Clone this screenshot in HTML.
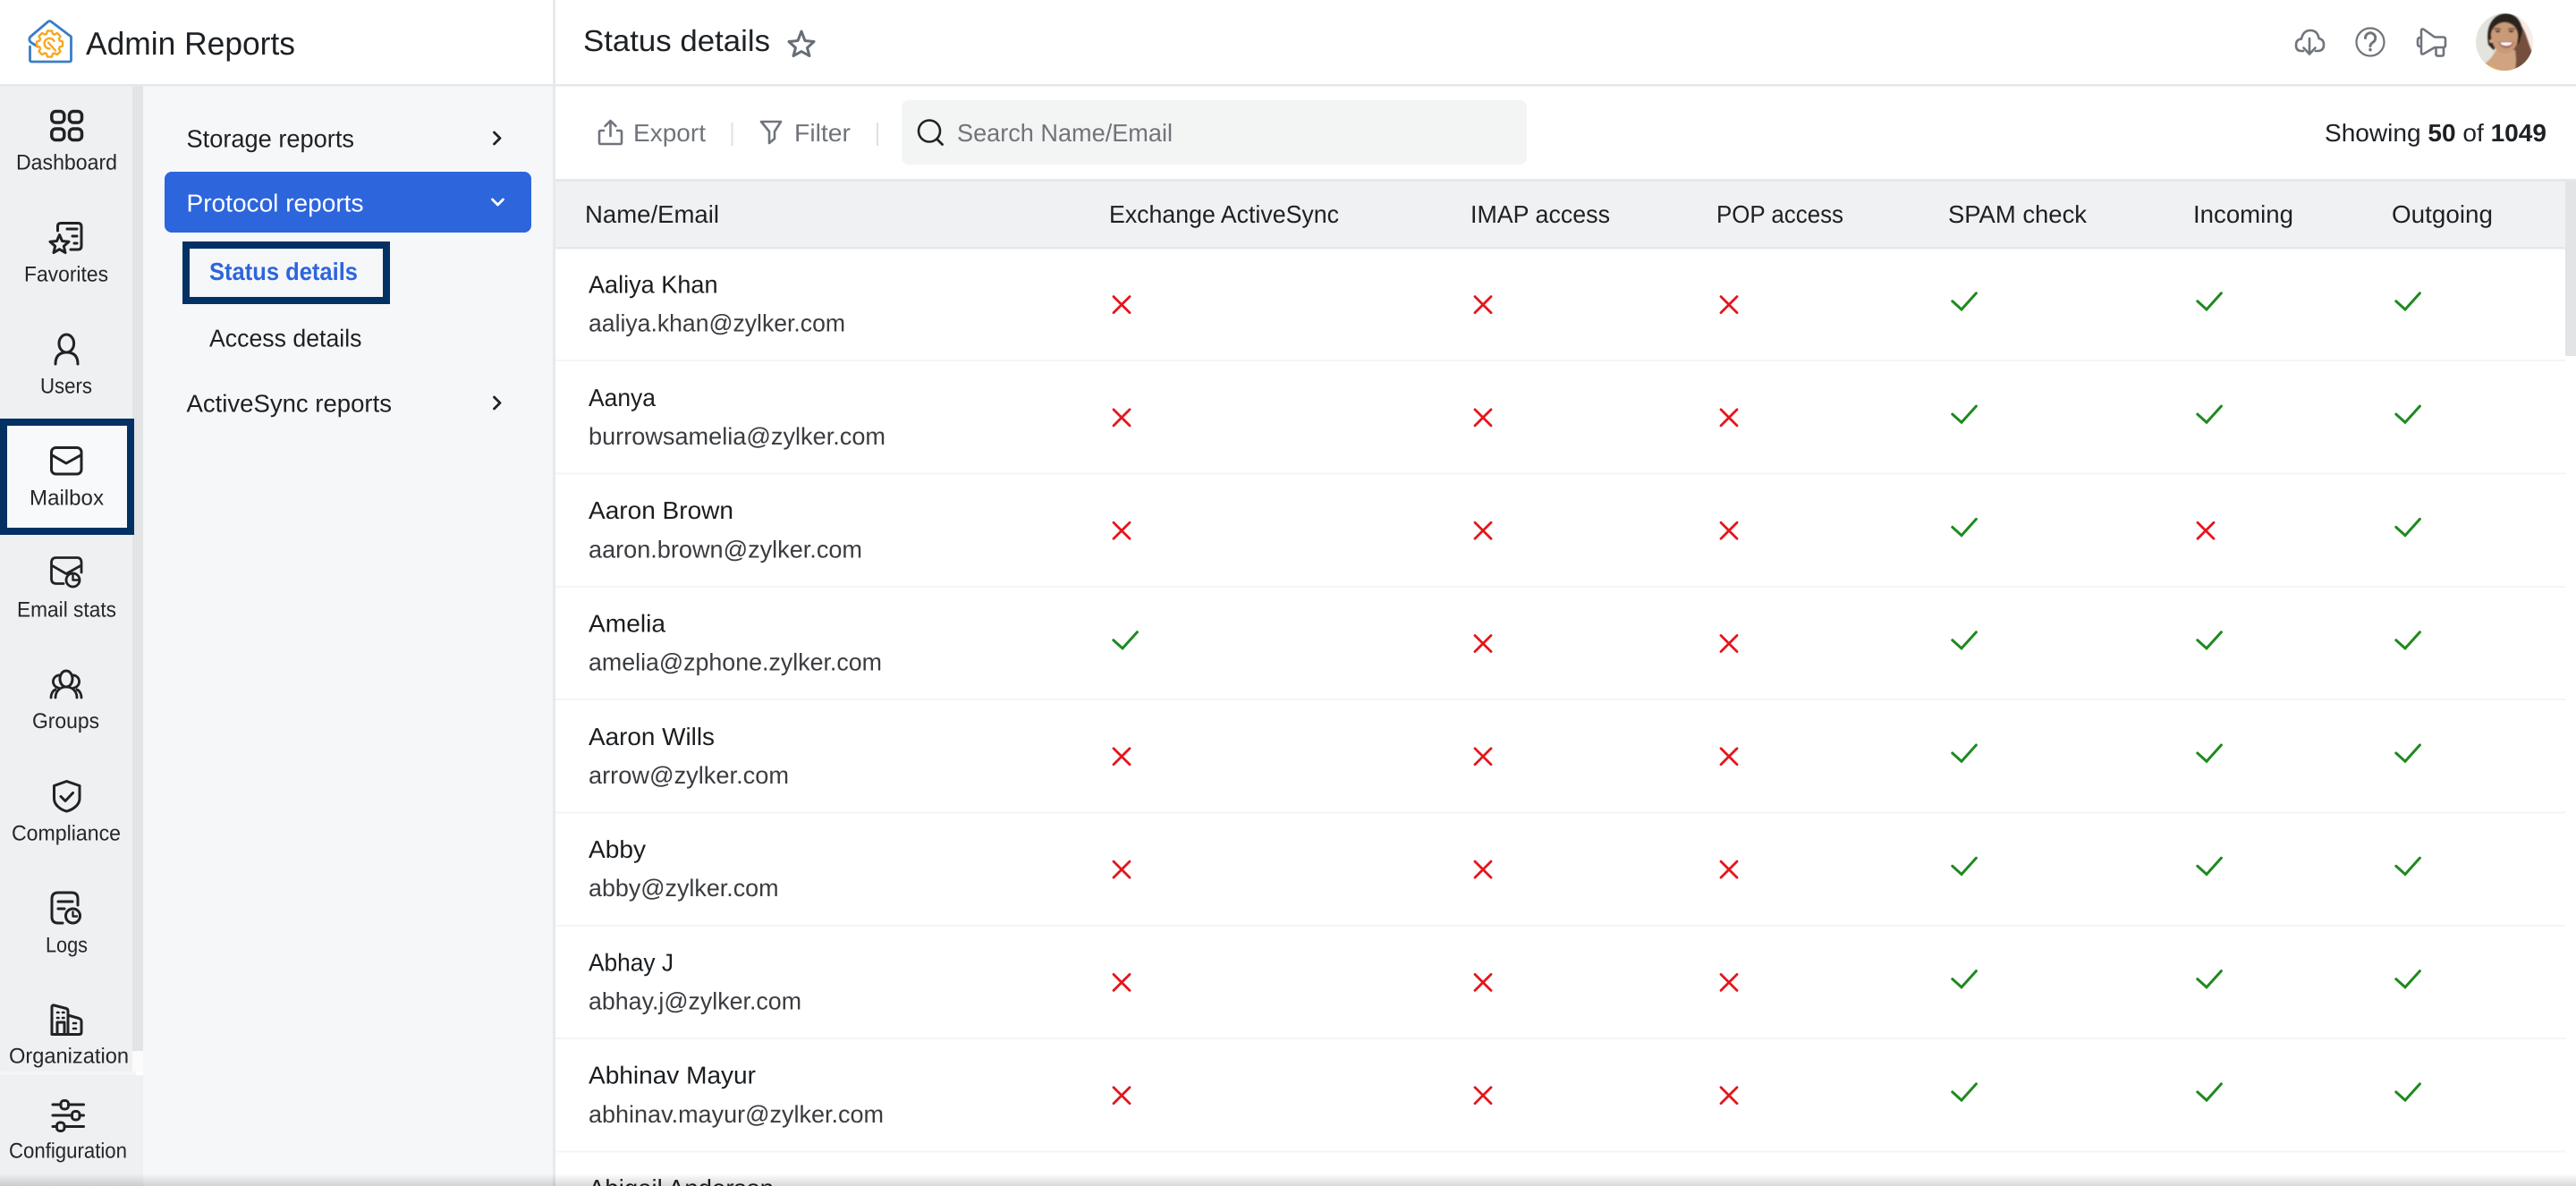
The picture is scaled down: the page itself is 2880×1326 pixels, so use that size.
<!DOCTYPE html>
<html lang="en">
<head>
<meta charset="utf-8">
<title>Admin Reports - Status details</title>
<style>
html,body{margin:0;padding:0;width:2880px;height:1326px;overflow:hidden;background:#fff}
svg{display:block}
text{font-family:"Liberation Sans",sans-serif;text-rendering:geometricPrecision;fill:#1d2024}
.nav{font-size:24px;fill:#23272b}
.pan{font-size:27.5px}
.th{font-size:27.5px;fill:#1d2024}
.nm{font-size:27.5px;fill:#1a1d20}
.em{font-size:27px;fill:#3a3c3f}
.tl{font-size:27.5px;fill:#70747a}
.ic{fill:none;stroke:#1f2326;stroke-width:3;stroke-linecap:round;stroke-linejoin:round}
.ig{fill:none;stroke:#70747c;stroke-width:2.6;stroke-linecap:round;stroke-linejoin:round}
</style>
</head>
<body>
<svg xmlns="http://www.w3.org/2000/svg" width="2880" height="1326" viewBox="0 0 2880 1326">
<defs>
<path id="x" d="M1 1L19 19M19 1L1 19" fill="none" stroke="#e3161c" stroke-width="2.8" stroke-linecap="round"/>
<path id="k" d="M0.8 9.8L11 19L27.4 0.8" fill="none" stroke="#1e8a1e" stroke-width="3" stroke-linecap="round" stroke-linejoin="miter"/>
<path id="t" d="M11.2 -3.5L14.5 -2.5V2.5L11.2 3.5A11.7 11.7 0 0 1 10.4 5.4" fill="none" stroke="#f5a81f" stroke-width="2.4" stroke-linejoin="round"/>
<linearGradient id="sh" x1="0" y1="0" x2="0" y2="1"><stop offset="0" stop-color="#000" stop-opacity="0"/><stop offset="1" stop-color="#000" stop-opacity=".15"/></linearGradient>
<clipPath id="av"><circle cx="2800" cy="47" r="32"/></clipPath>
<filter id="soft" x="-5%" y="-5%" width="110%" height="110%"><feGaussianBlur stdDeviation="0.7"/></filter>
</defs>

<!-- panels -->
<rect x="0" y="96" width="148" height="1230" fill="#eff0f2"/>
<rect x="148" y="96" width="12" height="1079" fill="#e3e4e6"/>
<rect x="148" y="1175" width="12" height="23" fill="#fbfbfc"/>
<rect x="0" y="1198" width="152" height="4" fill="#f5f6f7"/>
<rect x="0" y="1202" width="160" height="124" fill="#eff0f2"/>
<rect x="160" y="96" width="458" height="1230" fill="#f6f7f9"/>
<rect x="618" y="0" width="3" height="1326" fill="#e8e9eb"/>
<rect x="0" y="94" width="2880" height="2.5" fill="#e6e7e9"/>

<!-- logo -->
<g fill="none" stroke-linecap="round" stroke-linejoin="round">
<path d="M33.5 52V67q0 2 2 2H77.5q2 0 2-2V41L57 24q-1.500-1-3 0L34 41q-1.500 1.500-1 4q.5 2 2.500 3L42 52" stroke="#3b7dc4" stroke-width="2.800"/>
<g transform="translate(55.500,49)">
<use href="#t"/>
<use href="#t" transform="rotate(45)"/>
<use href="#t" transform="rotate(90)"/>
<use href="#t" transform="rotate(135)"/>
<use href="#t" transform="rotate(180)"/>
<use href="#t" transform="rotate(225)"/>
<use href="#t" transform="rotate(270)"/>
<use href="#t" transform="rotate(315)"/>
</g>
<path d="M60.500 46a5.800 5.800 0 1 0-5 8.500M54 47.500l8 9" stroke="#f5a81f" stroke-width="2.400"/>
</g>
<text x="96" y="61" font-size="36" textLength="234" lengthAdjust="spacingAndGlyphs" fill="#1d2024">Admin Reports</text>

<!-- sidebar icons -->
<g class="ic">
<g stroke-width="3.500">
<rect x="57.800" y="124.500" width="14" height="12.500" rx="4.500"/>
<rect x="77.500" y="124.500" width="14" height="12.500" rx="4.500"/>
<rect x="57.800" y="144" width="14" height="12.500" rx="4.500"/>
<rect x="77.500" y="144" width="14" height="12.500" rx="4.500"/>
</g>
<path d="M64.500 258V253q0-3.500 3.500-3.500H87q4 0 4 4V275q0 4-4 4H79M75 256H86M81 264H86M83 272H86"/>
<path d="M66.500 262.500L69.500 269.500L77 270.200L71.300 275.200L73 282.500L66.500 278.700L60 282.500L61.700 275.200L56 270.200L63.500 269.500Z"/>
<ellipse cx="74.300" cy="384" rx="8.300" ry="10"/>
<path d="M62 407Q62 394 74.500 394Q87 394 87 407"/>
<path d="M71 652.500H63q-5.500 0-5.500-5.500V629q0-5.500 5.500-5.500H86q5 0 5 5.500V640M57.500 632L74 641.500L91 632" stroke-width="2.800"/>
<circle cx="81.500" cy="648.500" r="7.500" stroke-width="2.800"/>
<path d="M81.500 641V648.500H89" stroke-width="2.400"/>
<ellipse cx="74" cy="759" rx="7" ry="9"/>
<path d="M67.500 755a6.500 6.500 0 1 0-2 14M80.500 755a6.500 6.500 0 1 1 2 14M62 780C62 773 67 768 74 768S86 773 86 780M57 780C57 776 59 772 62 771M91 780C91 776 89 772 86 771" stroke-width="2.800"/>
<path d="M74.500 873.500L89 878.500V893C89 900 81 905.500 74.500 907C68 905.500 60.500 900 60.500 893V878.500Z"/>
<path d="M68 890.500L73 895.500L81.500 886.500"/>
<path d="M70 1032H65q-7 0-7-7V1005q0-7 7-7H80q7 0 7 7V1012M65 1008H81M65 1016H72"/>
<circle cx="81.500" cy="1024" r="8"/>
<path d="M81.500 1019.500V1024.500H86" stroke-width="2.400"/>
<path d="M58 1156.500V1126q0-2.500 2.500-2L74 1127.500q2 .5 2 3V1156.500M76 1135L88 1138.500q3 1 3 3.500V1154q0 2.500-2.500 2.500H60q-2 0-2-2M64 1156V1143H72V1156"/>
<path d="M64 1132H65.500M70 1132H71.500M64 1138H65.500M70 1138H71.500M82 1144H85M82 1150H85" stroke-width="2.600"/>
<path d="M59 1235H68M76.500 1235H93.500M59 1247H80.500M89 1247H93.500M59 1259.500H63.500M72 1259.500H93.500"/>
<rect x="68" y="1230.500" width="8.500" height="9.500" rx="3.500"/>
<rect x="80.500" y="1242.500" width="8.500" height="9.500" rx="3.500"/>
<rect x="63.500" y="1255" width="8.500" height="9.500" rx="3.500"/>
</g>
<g transform="translate(0,-0.5)">
<text class="nav" x="18" y="190" textLength="113" lengthAdjust="spacingAndGlyphs">Dashboard</text>
<text class="nav" x="27" y="315" textLength="94" lengthAdjust="spacingAndGlyphs">Favorites</text>
<text class="nav" x="45" y="440" textLength="58" lengthAdjust="spacingAndGlyphs">Users</text>
<text class="nav" x="19" y="690" textLength="111" lengthAdjust="spacingAndGlyphs">Email stats</text>
<text class="nav" x="36" y="814.500" textLength="75" lengthAdjust="spacingAndGlyphs">Groups</text>
<text class="nav" x="13" y="940" textLength="122" lengthAdjust="spacingAndGlyphs">Compliance</text>
<text class="nav" x="51" y="1065" textLength="47" lengthAdjust="spacingAndGlyphs">Logs</text>
<text class="nav" x="10" y="1189" textLength="134" lengthAdjust="spacingAndGlyphs">Organization</text>
<text class="nav" x="10" y="1295" textLength="132" lengthAdjust="spacingAndGlyphs">Configuration</text>
</g>

<!-- mailbox focus frame -->
<rect x="4" y="472" width="142" height="122" fill="#f8f9fa" stroke="#033163" stroke-width="8"/>
<g class="ic">
<rect x="57.500" y="500.500" width="33.500" height="29.500" rx="5"/>
<path d="M57.500 508.500L74 518L91 508.500"/>
</g>
<text class="nav" x="33" y="564.500" textLength="83" lengthAdjust="spacingAndGlyphs">Mailbox</text>

<!-- sub navigation -->
<text class="pan" x="208.500" y="164.500" textLength="187.500" lengthAdjust="spacingAndGlyphs">Storage reports</text>
<path d="M552.500 148L559 154.500L552.500 161" fill="none" stroke="#1f2326" stroke-width="2.800" stroke-linecap="round" stroke-linejoin="round"/>
<rect x="184" y="192" width="410" height="68" rx="8" fill="#2d65dc"/>
<text class="pan" x="208.500" y="236.500" textLength="198" lengthAdjust="spacingAndGlyphs" style="fill:#fff">Protocol reports</text>
<path d="M550.500 223L556.500 229L562.500 223" fill="none" stroke="#fff" stroke-width="2.800" stroke-linecap="round" stroke-linejoin="round"/>
<rect x="208" y="274" width="224" height="62" fill="#f6f7f9" stroke="#033163" stroke-width="8"/>
<text class="pan" x="234" y="313" textLength="166" lengthAdjust="spacingAndGlyphs" font-weight="700" style="fill:#2d65dc">Status details</text>
<text class="pan" x="234" y="387.500" textLength="170.500" lengthAdjust="spacingAndGlyphs">Access details</text>
<text class="pan" x="208.500" y="460.500" textLength="229.500" lengthAdjust="spacingAndGlyphs">ActiveSync reports</text>
<path d="M552.500 444L559 450.500L552.500 457" fill="none" stroke="#1f2326" stroke-width="2.800" stroke-linecap="round" stroke-linejoin="round"/>

<!-- header -->
<text x="652" y="57" font-size="33.500" textLength="209" lengthAdjust="spacingAndGlyphs" fill="#1d2024">Status details</text>
<path d="M896 35L900 45.500L910 46.500L902.500 53.500L905 62.500L896 57.500L887 62.500L889.500 53.500L882 46.500L892 45.500Z" fill="none" stroke="#666d75" stroke-width="3" stroke-linejoin="round"/>
<g class="ig">
<path d="M2575 57H2573Q2567 57 2567 50.500Q2567 44 2573 43.500Q2575 34 2583 34Q2591 34 2592.500 43Q2598 44 2598 50Q2598 57 2591 57H2589"/>
<path d="M2582 43V60M2575.500 53.500L2582 60.500L2588.500 53.500"/>
<circle cx="2650" cy="47" r="15.500" stroke-width="2.200"/>
<path d="M2644.500 42.500A5.600 5.600 0 1 1 2653 47.200C2651 48.500 2650 49.500 2650 51.500" stroke-width="3"/>
<path d="M2650 55.500V55.700" stroke-width="3.400"/>
<path d="M2707 34.500Q2707 31.500 2710 33L2722 41.500H2731.500Q2734 41.500 2734 44V50.500Q2734 53 2731.500 53H2722L2710 60Q2707 61.500 2707 58.500V52H2706Q2703 52 2703 49V45Q2703 42 2706 42H2707ZM2707 42V52M2723.500 53V60.500Q2723.500 62.500 2726 62.500H2729.500Q2732 62.500 2732 60.500V53"/>
</g>

<!-- avatar -->
<g clip-path="url(#av)">
<rect x="2768" y="15" width="64" height="64" fill="#e4e4df"/>
<rect x="2816" y="15" width="16" height="64" fill="#f8ede6"/>
<g filter="url(#soft)">
<path d="M2812 22C2824 30 2825 46 2831 58C2830 70 2820 76 2808 80L2806 50Z" fill="#74503e"/>
<path d="M2782 50C2778 26 2790 15 2802 15C2812 15 2820 24 2820 36L2816 50L2806 30L2788 56Z" fill="#2c201b"/>
<path d="M2788 60C2785 67 2778 70 2775 75V82H2812L2813 66L2812 56L2792 54Z" fill="#d0a381"/>
<path d="M2776 70L2796 79H2772Z" fill="#f0b52d"/>
<path d="M2785 38C2786 30 2794 25 2800 25C2807 25 2815 30 2815 40C2815 52 2808 60 2800 60C2792 60 2785 50 2785 38Z" fill="#c99a78"/>
<path d="M2788 32.800Q2792 31 2796 32.800M2804 32.800Q2808 31 2812 32.800" fill="none" stroke="#4a3228" stroke-width="1.200"/>
<ellipse cx="2792.500" cy="35" rx="2.800" ry="1.200" fill="#4a3228"/>
<ellipse cx="2807.500" cy="35" rx="2.800" ry="1.200" fill="#4a3228"/>
<path d="M2793 47Q2802 46 2811 47Q2808 54 2802 54Q2796 54 2793 47Z" fill="#ad6a5c"/>
<path d="M2795 47.800Q2802 47 2809 47.800Q2807 51 2802 51Q2797 51 2795 47.800Z" fill="#fff"/>
<circle cx="2785" cy="46" r="1.800" fill="#e0b080"/>
</g>
</g>

<!-- toolbar -->
<g class="ig" stroke-width="2.400">
<path d="M675 146H671.500Q670 146 670 147.500V159.500Q670 161 671.500 161H693.500Q695 161 695 159.500V147.500Q695 146 693.500 146H690M682.500 152V135.500M676.500 141L682.500 135L688.500 141"/>
<path d="M851 136H873L866 147V155L860 160V147Z"/>
</g>
<text class="tl" x="708" y="158" textLength="81" lengthAdjust="spacingAndGlyphs">Export</text>
<rect x="817.500" y="137" width="2" height="26" fill="#dfe0e2"/>
<text class="tl" x="888" y="158" textLength="63" lengthAdjust="spacingAndGlyphs">Filter</text>
<rect x="980" y="137" width="2" height="26" fill="#dfe0e2"/>
<rect x="1008" y="112" width="699" height="72" rx="8" fill="#f3f4f4"/>
<circle cx="1039" cy="146.500" r="12" fill="none" stroke="#222" stroke-width="2.600"/>
<path d="M1047.500 155.500L1053.500 161.500" stroke="#222" stroke-width="2.800" stroke-linecap="round"/>
<text class="tl" x="1070" y="158" textLength="241" lengthAdjust="spacingAndGlyphs">Search Name/Email</text>
<text x="2599" y="158" font-size="27.500" textLength="248" lengthAdjust="spacingAndGlyphs">Showing <tspan font-weight="700">50</tspan> of <tspan font-weight="700">1049</tspan></text>

<!-- table header -->
<rect x="621" y="200" width="2259" height="3" fill="#e6e7e9"/>
<rect x="621" y="203" width="2247" height="73" fill="#f0f1f3"/>
<rect x="621" y="276" width="2247" height="2.500" fill="#e6e7e9"/>
<rect x="2868" y="203" width="12" height="195" fill="#e3e4e6"/>
<text class="th" x="654" y="249" textLength="150" lengthAdjust="spacingAndGlyphs">Name/Email</text>
<text class="th" x="1240" y="249" textLength="257" lengthAdjust="spacingAndGlyphs">Exchange ActiveSync</text>
<text class="th" x="1644" y="249" textLength="156" lengthAdjust="spacingAndGlyphs">IMAP access</text>
<text class="th" x="1919" y="249" textLength="142" lengthAdjust="spacingAndGlyphs">POP access</text>
<text class="th" x="2178" y="249" textLength="155" lengthAdjust="spacingAndGlyphs">SPAM check</text>
<text class="th" x="2452" y="249" textLength="112" lengthAdjust="spacingAndGlyphs">Incoming</text>
<text class="th" x="2674" y="249" textLength="113" lengthAdjust="spacingAndGlyphs">Outgoing</text>

<!-- row separators -->
<g fill="#f5f5f5">
<rect x="621" y="402" width="2247" height="2"/>
<rect x="621" y="528.500" width="2247" height="2"/>
<rect x="621" y="655" width="2247" height="2"/>
<rect x="621" y="781" width="2247" height="2"/>
<rect x="621" y="907.500" width="2247" height="2"/>
<rect x="621" y="1034" width="2247" height="2"/>
<rect x="621" y="1160" width="2247" height="2"/>
<rect x="621" y="1286.500" width="2247" height="2"/>
</g>

<!-- rows -->
<text class="nm" x="658" y="327.600" textLength="144.500" lengthAdjust="spacingAndGlyphs">Aaliya Khan</text>
<text class="em" x="658" y="370.700" textLength="287" lengthAdjust="spacingAndGlyphs">aaliya.khan@zylker.com</text>
<use href="#x" x="1244" y="330.600"/><use href="#x" x="1648" y="330.600"/><use href="#x" x="1923" y="330.600"/><use href="#k" x="2182" y="327"/><use href="#k" x="2456" y="327"/><use href="#k" x="2678" y="327"/>

<g transform="translate(0,126.300)">
<text class="nm" x="658" y="327.600" textLength="75" lengthAdjust="spacingAndGlyphs">Aanya</text>
<text class="em" x="658" y="370.700" textLength="332" lengthAdjust="spacingAndGlyphs">burrowsamelia@zylker.com</text>
<use href="#x" x="1244" y="330.600"/><use href="#x" x="1648" y="330.600"/><use href="#x" x="1923" y="330.600"/><use href="#k" x="2182" y="327"/><use href="#k" x="2456" y="327"/><use href="#k" x="2678" y="327"/>
</g>

<g transform="translate(0,252.600)">
<text class="nm" x="658" y="327.600" textLength="162" lengthAdjust="spacingAndGlyphs">Aaron Brown</text>
<text class="em" x="658" y="370.700" textLength="306" lengthAdjust="spacingAndGlyphs">aaron.brown@zylker.com</text>
<use href="#x" x="1244" y="330.600"/><use href="#x" x="1648" y="330.600"/><use href="#x" x="1923" y="330.600"/><use href="#k" x="2182" y="327"/><use href="#x" x="2456" y="330.600"/><use href="#k" x="2678" y="327"/>
</g>

<g transform="translate(0,378.900)">
<text class="nm" x="658" y="327.600" textLength="86" lengthAdjust="spacingAndGlyphs">Amelia</text>
<text class="em" x="658" y="370.700" textLength="328" lengthAdjust="spacingAndGlyphs">amelia@zphone.zylker.com</text>
<use href="#k" x="1244" y="327"/><use href="#x" x="1648" y="330.600"/><use href="#x" x="1923" y="330.600"/><use href="#k" x="2182" y="327"/><use href="#k" x="2456" y="327"/><use href="#k" x="2678" y="327"/>
</g>

<g transform="translate(0,505.200)">
<text class="nm" x="658" y="327.600" textLength="141" lengthAdjust="spacingAndGlyphs">Aaron Wills</text>
<text class="em" x="658" y="370.700" textLength="224" lengthAdjust="spacingAndGlyphs">arrow@zylker.com</text>
<use href="#x" x="1244" y="330.600"/><use href="#x" x="1648" y="330.600"/><use href="#x" x="1923" y="330.600"/><use href="#k" x="2182" y="327"/><use href="#k" x="2456" y="327"/><use href="#k" x="2678" y="327"/>
</g>

<g transform="translate(0,631.500)">
<text class="nm" x="658" y="327.600" textLength="64" lengthAdjust="spacingAndGlyphs">Abby</text>
<text class="em" x="658" y="370.700" textLength="212.500" lengthAdjust="spacingAndGlyphs">abby@zylker.com</text>
<use href="#x" x="1244" y="330.600"/><use href="#x" x="1648" y="330.600"/><use href="#x" x="1923" y="330.600"/><use href="#k" x="2182" y="327"/><use href="#k" x="2456" y="327"/><use href="#k" x="2678" y="327"/>
</g>

<g transform="translate(0,757.800)">
<text class="nm" x="658" y="327.600" textLength="95" lengthAdjust="spacingAndGlyphs">Abhay J</text>
<text class="em" x="658" y="370.700" textLength="238" lengthAdjust="spacingAndGlyphs">abhay.j@zylker.com</text>
<use href="#x" x="1244" y="330.600"/><use href="#x" x="1648" y="330.600"/><use href="#x" x="1923" y="330.600"/><use href="#k" x="2182" y="327"/><use href="#k" x="2456" y="327"/><use href="#k" x="2678" y="327"/>
</g>

<g transform="translate(0,884.100)">
<text class="nm" x="658" y="327.600" textLength="187" lengthAdjust="spacingAndGlyphs">Abhinav Mayur</text>
<text class="em" x="658" y="370.700" textLength="330" lengthAdjust="spacingAndGlyphs">abhinav.mayur@zylker.com</text>
<use href="#x" x="1244" y="330.600"/><use href="#x" x="1648" y="330.600"/><use href="#x" x="1923" y="330.600"/><use href="#k" x="2182" y="327"/><use href="#k" x="2456" y="327"/><use href="#k" x="2678" y="327"/>
</g>

<text class="nm" x="658" y="1338" textLength="207" lengthAdjust="spacingAndGlyphs">Abigail Anderson</text>

<!-- bottom shadow -->
<rect x="0" y="1312" width="2880" height="14" fill="url(#sh)"/>
</svg>
</body>
</html>
